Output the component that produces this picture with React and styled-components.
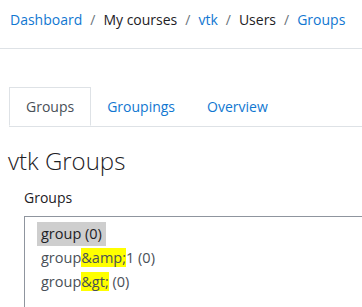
import React from 'react';
import styled, { createGlobalStyle } from 'styled-components';

const GlobalStyle = createGlobalStyle`
  html, body {
    margin: 0;
    padding: 0;
    background: #fff;
    overflow: hidden;
  }
  body {
    font-family: "Open Sans", "Noto Sans", "Liberation Sans", sans-serif;
    color: #1d2125;
  }
`;

const Page = styled.div`
  width: 362px;
  height: 307px;
  overflow: hidden;
`;

const Breadcrumb = styled.nav`
  display: flex;
  align-items: center;
  height: 49px;
  padding: 0 0 10px 10px;
  box-sizing: border-box;
  border-bottom: 1px solid #dee2e6;
  font-size: 14px;
  white-space: nowrap;
`;

const Crumb = styled.span`
  color: ${p => (p.$link ? '#1177d1' : '#1d2125')};
`;

const Sep = styled.span`
  color: #6a737b;
  padding: 0 8px;
`;

const Tabs = styled.ul`
  display: flex;
  list-style: none;
  margin: 38px 0 0 9px;
  padding: 0;
  border-bottom: 1px solid #dee2e6;
`;

const Tab = styled.li`
  height: 39px;
  padding: 0 16px;
  display: flex;
  align-items: center;
  font-size: 14px;
  box-sizing: border-box;
  margin-bottom: ${p => (p.$active ? '-1px' : '0')};
  border: ${p => (p.$active ? '1px solid #dee2e6' : 'none')};
  border-bottom-color: #fff;
  background: ${p => (p.$active ? '#fff' : 'transparent')};
  color: ${p => (p.$active ? '#495057' : '#1177d1')};
`;

const Heading = styled.h2`
  margin: 18px 0 0 8px;
  font-size: 24px;
  font-weight: 300;
  line-height: 32px;
  color: #1d2125;
`;

const Label = styled.div`
  margin: 10px 0 0 24px;
  font-size: 14px;
  line-height: 22px;
  color: #1d2125;
`;

const SelectBox = styled.div`
  margin: 7px 0 0 24px;
  width: 360px;
  height: 120px;
  border: 1px solid #8f959e;
  padding: 5px 12px;
  box-sizing: border-box;
`;

const Option = styled.div`
  display: table;
  padding: 0 4px;
  height: 24px;
  line-height: 24px;
  font-size: 14.5px;
  color: ${p => (p.$selected ? '#1d2125' : '#495057')};
  background: ${p => (p.$selected ? '#cecece' : 'transparent')};
`;

const Mark = styled.span`
  background: #ffff00;
  color: inherit;
`;

export default function App() {
  return (
    <Page>
      <GlobalStyle />
      <Breadcrumb>
        <Crumb $link>Dashboard</Crumb>
        <Sep>/</Sep>
        <Crumb>My courses</Crumb>
        <Sep>/</Sep>
        <Crumb $link>vtk</Crumb>
        <Sep>/</Sep>
        <Crumb>Users</Crumb>
        <Sep>/</Sep>
        <Crumb $link>Groups</Crumb>
      </Breadcrumb>
      <Tabs>
        <Tab $active>Groups</Tab>
        <Tab>Groupings</Tab>
        <Tab>Overview</Tab>
      </Tabs>
      <Heading>vtk Groups</Heading>
      <Label>Groups</Label>
      <SelectBox>
        <Option $selected>group (0)</Option>
        <Option>group<Mark>&amp;amp;</Mark>1 (0)</Option>
        <Option>group<Mark>&amp;gt;</Mark> (0)</Option>
      </SelectBox>
    </Page>
  );
}
